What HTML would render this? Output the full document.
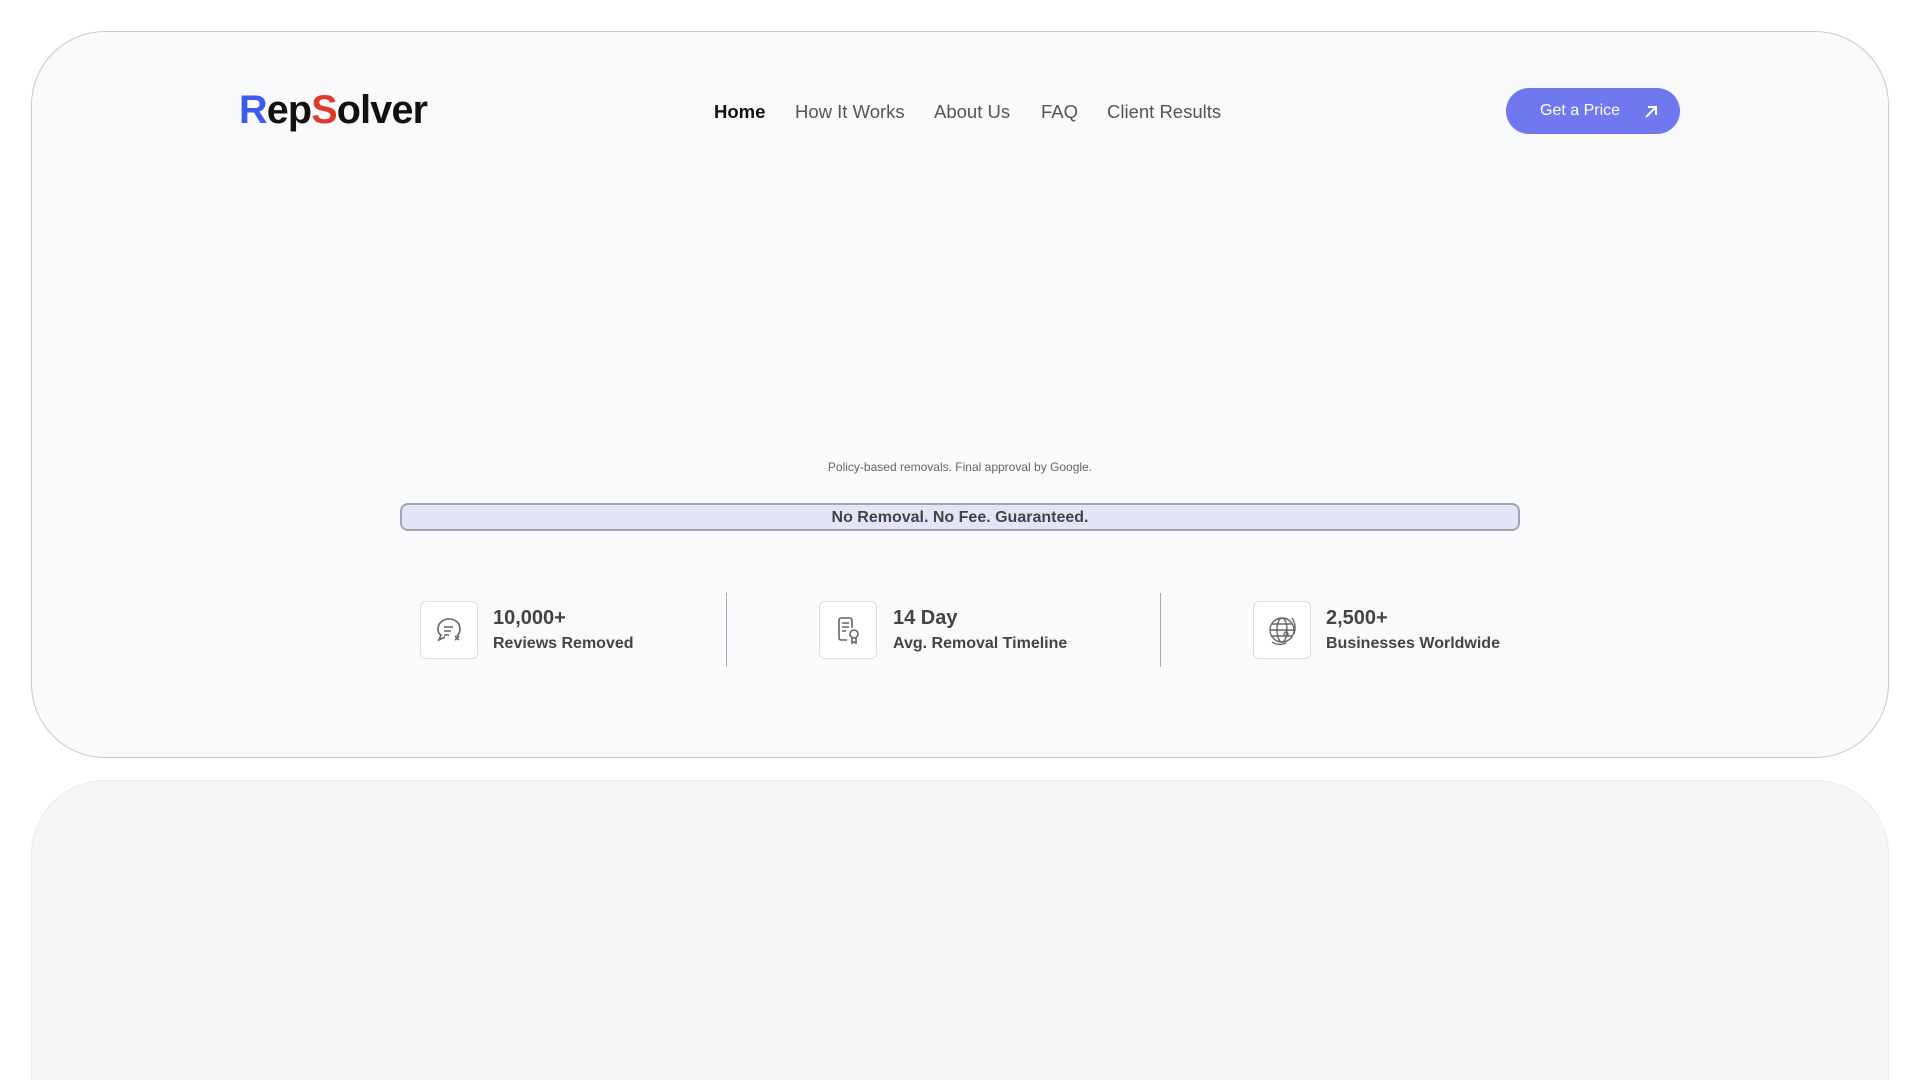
<!DOCTYPE html>
<html><head><meta charset="utf-8"><style>
*{box-sizing:border-box;margin:0;padding:0}
html{width:1920px;height:1080px;overflow:hidden}
body{width:1920px;height:1080px;background:#fff;font-family:"Liberation Sans",sans-serif;position:relative;overflow:hidden}
.card{position:absolute;left:31px;top:31px;width:1858px;height:727px;border:1px solid #c9c9cc;border-radius:74px;background:#f9fafc}
.card2{position:absolute;left:31px;top:780px;width:1858px;height:300px;border:1px solid #ececee;border-bottom:none;border-radius:74px 74px 0 0;background:#f6f6f8}
.a{position:absolute}
.logo{left:239px;top:88px;font-size:39.5px;font-weight:bold;letter-spacing:-0.8px;color:#111}
.nav{top:101px;font-size:18.5px;color:#555}
.btn{left:1506px;top:88px;width:174px;height:46px;border-radius:23px;background:#6f78ee;color:#fff;font-size:16px}
.pol{left:0;width:1920px;top:460px;text-align:center;font-size:12px;color:#666}
.ban{left:400px;top:503px;width:1120px;height:28px;border:2px solid #a4a4b0;border-radius:8px;background:#e4e4f8;text-align:center;font-size:16px;font-weight:bold;color:#444;line-height:25px}
.ic{width:58px;height:58px;border:1px solid #dedee2;border-radius:6px;background:#fff;top:601px;display:flex;align-items:center;justify-content:center}
.num{top:607px;font-size:20px;font-weight:bold;color:#444}
.lab{top:635px;font-size:16px;font-weight:bold;color:#444}
.div{top:593px;width:1px;height:74px;background:#a8a8b0}
</style></head><body>
<div class="card"></div>
<div class="card2"></div>
<div class="a logo"><span style="color:#3e5bf0">R</span>ep<span style="color:#e23a2a">S</span>olver</div>
<div class="a nav" style="left:714px;color:#111;font-weight:bold">Home</div>
<div class="a nav" style="left:795px">How It Works</div>
<div class="a nav" style="left:934px">About Us</div>
<div class="a nav" style="left:1041px">FAQ</div>
<div class="a nav" style="left:1107px">Client Results</div>
<div class="a btn"><span class="a" style="left:34px;top:14px">Get a Price</span>
<svg class="a" style="left:138px;top:17px" width="14" height="14" viewBox="0 0 14 14"><path d="M2 12L12 2M4 2h8v8" stroke="#fff" stroke-width="2" fill="none"/></svg></div>
<div class="a pol">Policy-based removals. Final approval by Google.</div>
<div class="a ban">No Removal. No Fee. Guaranteed.</div>

<div class="a ic" style="left:420px"><svg width="32" height="32" viewBox="0 0 32 32" fill="none" stroke="#666" stroke-width="1.6"><path d="M16 5c6 0 11 4 11 10 0 3-1 5-3 7M16 5C10 5 5 9 5 15c0 3 1 5 3 6l-2 5 6-3"/><path d="M11 13h9M11 17h7M11 21h5M22 22l4 4M26 22l-4 4"/></svg></div>
<div class="a num" style="left:493px">10,000+</div>
<div class="a lab" style="left:493px">Reviews Removed</div>
<div class="a div" style="left:726px"></div>

<div class="a ic" style="left:819px"><svg width="32" height="32" viewBox="0 0 32 32" fill="none" stroke="#666" stroke-width="1.6"><path d="M20 14V6a2 2 0 0 0-2-2H9a2 2 0 0 0-2 2v18a2 2 0 0 0 2 2h6"/><path d="M10 9h7M10 13h7M10 17h4"/><circle cx="22" cy="20" r="4"/><path d="M20 23v6l2-1 2 1v-6"/></svg></div>
<div class="a num" style="left:893px">14 Day</div>
<div class="a lab" style="left:893px">Avg. Removal Timeline</div>
<div class="a div" style="left:1160px"></div>

<div class="a ic" style="left:1253px"><svg width="36" height="36" viewBox="0 0 36 36" fill="none" stroke="#666" stroke-width="1.4"><circle cx="18" cy="18" r="12"/><ellipse cx="18" cy="18" rx="5" ry="12"/><path d="M6 18h24M8 12h20M8 24h20"/><path d="M28 6c3 4 4 10 2 16M8 30c4 3 10 3 14 1"/><circle cx="22" cy="22" r="2"/></svg></div>
<div class="a num" style="left:1326px">2,500+</div>
<div class="a lab" style="left:1326px">Businesses Worldwide</div>
</body></html>
